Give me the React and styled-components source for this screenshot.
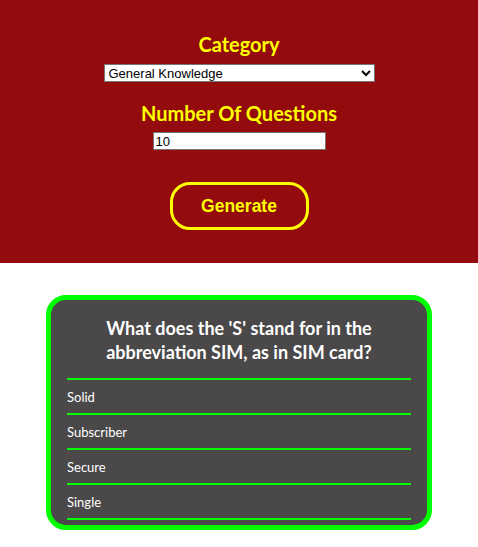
import styled, { createGlobalStyle } from "styled-components";

const GlobalStyle = createGlobalStyle`
  body {
    margin: 0;
    background: #ffffff;
    font-family: Lato, "Noto Sans", sans-serif;
  }
`;

const Header = styled.header`
  background: #930b0c;
  height: 263px;
  display: flex;
  flex-direction: column;
  align-items: center;
  padding-top: 33px;
  box-sizing: border-box;
`;

const Label = styled.h2`
  margin: ${({ $gap }) => $gap || "0"};
  color: #ffff00;
  font-size: 20px;
  line-height: 22px;
  font-weight: 700;
  text-align: center;
`;

const Select = styled.select`
  margin-top: 9px;
  width: 271px;
  height: 18px;
  font-family: Arial, "Liberation Sans", sans-serif;
  font-size: 13px;
  padding: 0;
  border: 1px solid #767676;
  border-radius: 0;
  background: #fff;
  color: #000;
`;

const NumberInput = styled.input`
  margin-top: 8px;
  width: 173px;
  height: 18px;
  box-sizing: border-box;
  font-family: Arial, "Liberation Sans", sans-serif;
  font-size: 13px;
  padding: 0 2px;
  border: 1px solid #767676;
  border-radius: 0;
`;

const GenerateButton = styled.button`
  margin-top: 32px;
  width: 139px;
  height: 48px;
  box-sizing: border-box;
  background: transparent;
  border: 3px solid #ffff00;
  border-radius: 20px;
  color: #ffff00;
  font-family: Arial, "Liberation Sans", sans-serif;
  font-weight: 700;
  font-size: 17.5px;
  cursor: pointer;
`;

const Main = styled.main`
  display: flex;
  justify-content: center;
  padding-top: 32px;
`;

const Card = styled.section`
  width: 386px;
  box-sizing: border-box;
  border: 5px solid #00ff00;
  border-radius: 20px;
  background: #4a4849;
  padding: 16px 16px 5px;
  color: #fff;
`;

const Question = styled.h3`
  margin: 0 0 14px;
  font-size: 18px;
  line-height: 24px;
  font-weight: 700;
  text-align: center;
`;

const Answers = styled.ul`
  list-style: none;
  margin: 0;
  padding: 0;
  border-bottom: 2px solid #00ff00;
`;

const Answer = styled.li`
  border-top: 2px solid #00ff00;
  height: 33px;
  display: flex;
  align-items: center;
  font-size: 13px;
`;

const answers = ["Solid", "Subscriber", "Secure", "Single"];

export default function App() {
  return (
    <>
      <GlobalStyle />
      <Header>
        <Label>Category</Label>
        <Select defaultValue="General Knowledge">
          <option>General Knowledge</option>
        </Select>
        <Label $gap="20px 0 0">Number Of Questions</Label>
        <NumberInput type="text" defaultValue="10" />
        <GenerateButton>Generate</GenerateButton>
      </Header>
      <Main>
        <Card>
          <Question>
            What does the 'S' stand for in the abbreviation SIM, as in SIM card?
          </Question>
          <Answers>
            {answers.map((a) => (
              <Answer key={a}>{a}</Answer>
            ))}
          </Answers>
        </Card>
      </Main>
    </>
  );
}
